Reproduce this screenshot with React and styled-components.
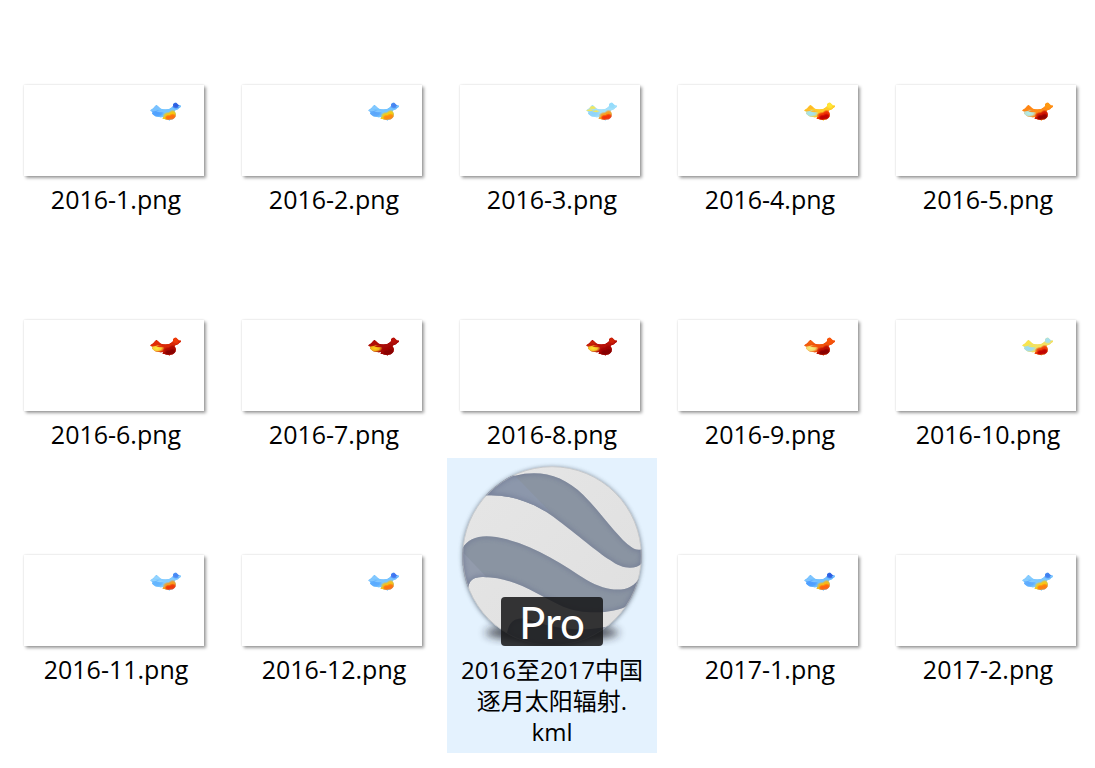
import React, { useId } from "react";
import styled, { createGlobalStyle } from "styled-components";

const GlobalStyle = createGlobalStyle`
  * { box-sizing: border-box; }
  body {
    margin: 0;
    background: #fff;
    color: #000;
    font-family: "Open Sans", "Noto Sans CJK SC", sans-serif;
    overflow-x: hidden;
  }
`;

/* The folder view is scrolled a little, so the first row starts above the window. */
const Viewport = styled.main`
  min-height: 100vh;
  overflow: hidden;
`;

const FileGrid = styled.ul`
  list-style: none;
  margin: -12px 0 0;
  padding: 0 0 12px 11px;
  display: grid;
  grid-template-columns: repeat(auto-fill, 210px);
  gap: 2px 8px;
  align-items: start;
`;

const Tile = styled.li`
  background: ${(p) => (p.$active ? "#e4f2fe" : "transparent")};
  padding-bottom: 6px;
`;

const Preview = styled.div`
  position: relative;
  height: 188px;
  display: flex;
  align-items: flex-end;
  justify-content: center;
`;

const Thumb = styled.div`
  display: flex;
  justify-content: flex-end;
  width: 180px;
  height: 91px;
  margin-right: 4px;
  padding: 17px 23px 0 0;
  background: #fff;
  box-shadow: 0 0 2px rgba(0, 0, 0, 0.14), 2px 2px 3px rgba(0, 0, 0, 0.38);
`;

const MapSvg = styled.svg`
  display: block;
  width: 31px;
  height: 19px;
`;

const GlobeSvg = styled.svg`
  display: block;
  width: 100%;
  height: 100%;
`;

const ProBadge = styled.span`
  position: absolute;
  bottom: 0;
  left: 54px;
  width: 102px;
  height: 49px;
  border-radius: 4px;
  background: rgba(22, 22, 23, 0.86);
  color: #fff;
  font: 400 44px/51px Lato, sans-serif;
  text-align: center;
`;

const Caption = styled.div`
  padding-top: 8px;
  font-size: ${(p) => (p.$wrapped ? "24px" : "25px")};
  line-height: 31px;
  text-align: center;
`;

const Line = styled.span`
  display: block;
  white-space: nowrap;
`;

const OUTLINE =
  "M29 54L34 51L38 48L42 45L43 41L49 38L53 41L56 45L60 48L66 51L76 52L84 51L90 48L94 45L98 42L98 36L102 32L107 31L112 36L116 40L123 40L122 45L117 49L113 53L108 54L103 58L106 62L107 67L106 74L102 79L96 83L89 84L87 88L84 84L77 83L72 81L66 81L68 75L62 77L54 75L46 74L39 69L35 65L36 60L31 58Z";

function HeatMap({ colors }) {
  const id = useId().replace(/[^a-zA-Z0-9]/g, "");
  const [base, north, tibet, east, south, core] = colors;
  const spots = [
    [tibet, 50, 64, 23, 12],
    [north, 49, 47, 13, 6],
    [north, 40, 55, 12, 4],
    [north, 60, 58, 13, 4],
    [base, 80, 56, 20, 7],
    [east, 107, 40, 14, 11],
    [base, 118, 44, 6, 4],
    [south, 84, 72, 18, 13],
    [south, 97, 66, 14, 13],
    [south, 74, 79, 10, 6],
    [core, 84, 77, 11, 9],
    [core, 97, 75, 13, 11],
  ];
  return (
    <MapSvg viewBox="29 30 93 57" preserveAspectRatio="none" aria-hidden="true">
      <defs>
        <clipPath id={`${id}c`}>
          <path d={OUTLINE} />
        </clipPath>
        {spots.map(([color], i) => (
          <radialGradient id={`${id}${i}`} key={i}>
            <stop offset="0" stopColor={color} />
            <stop offset="0.55" stopColor={color} stopOpacity="0.85" />
            <stop offset="1" stopColor={color} stopOpacity="0" />
          </radialGradient>
        ))}
      </defs>
      <g clipPath={`url(#${id}c)`}>
        <path d={OUTLINE} fill={base} />
        {spots.map(([, cx, cy, rx, ry], i) => (
          <ellipse key={i} cx={cx} cy={cy} rx={rx} ry={ry} fill={`url(#${id}${i})`} />
        ))}
      </g>
    </MapSvg>
  );
}

const BAND_TOP =
  "M130 137C190 130 270 150 340 200C420 260 470 305 510 330C550 360 590 360 610 335L610 296C598 302 583 299 575 292C530 260 490 195 430 135C370 75 300 58 225 77L130 60Z";
const BAND_MIDDLE =
  "M60 310C80 257 130 250 200 268C290 290 370 345 440 390C510 430 575 430 600 380L625 420L568 465C520 492 430 495 370 470C290 435 230 383 130 381C100 380 88 390 84 416L50 420Z";
const BAND_BOTTOM =
  "M200 565C202 515 225 496 270 510C330 532 420 550 510 528L500 600L200 600Z";

function GlobeIcon() {
  return (
    <GlobeSvg viewBox="21 24 630 564" aria-hidden="true">
      <defs>
        <clipPath id="globe"><circle cx="336" cy="318" r="269" /></clipPath>
        <clipPath id="bands"><path d={BAND_TOP} /><path d={BAND_MIDDLE} /><path d={BAND_BOTTOM} /></clipPath>
        <filter id="soft" x="-20%" y="-60%" width="140%" height="220%"><feGaussianBlur stdDeviation="13" /></filter>
        <filter id="rim" x="-10%" y="-10%" width="120%" height="120%"><feGaussianBlur stdDeviation="6" /></filter>
        <linearGradient id="light" x1="0" y1="0" x2="1" y2="1">
          <stop offset="0" stopColor="#e6e6e6" />
          <stop offset="1" stopColor="#dfdfdf" />
        </linearGradient>
      </defs>
      <ellipse cx="336" cy="548" rx="200" ry="26" fill="#20242a" opacity="0.75" filter="url(#soft)" />
      <circle cx="336" cy="320" r="270" fill="#5f6c7a" opacity="0.75" filter="url(#rim)" />
      <g clipPath="url(#globe)">
        <circle cx="336" cy="318" r="270" fill="url(#light)" />
        <g fill="#8a94a2">
          <path d={BAND_TOP} />
          <path d={BAND_MIDDLE} />
          <path d={BAND_BOTTOM} />
        </g>
        <g clipPath="url(#bands)">
          <path d="M225 77L100 60L100 150L300 180L330 185Z" fill="#8c97ab" />
          <path d="M67 305L40 430L150 392Z" fill="#929bac" />
          <g fill="none" stroke="#6c7592" strokeWidth="11" opacity="0.6" filter="url(#rim)">
            <path d={BAND_TOP} />
            <path d={BAND_MIDDLE} />
            <path d={BAND_BOTTOM} />
            <circle cx="336" cy="318" r="269" />
          </g>
        </g>
        <circle cx="336" cy="318" r="268" fill="none" stroke="#b6babf" strokeWidth="3" opacity="0.7" />
      </g>
    </GlobeSvg>
  );
}

/* Colours: base, north, Tibet, north-east, south, south core. */
const FILES = [
  { name: "2016-1.png", colors: ["#74c4ff", "#7cc0ff", "#4e9fff", "#2858e0", "#ffc800", "#ff6c10"] },
  { name: "2016-2.png", colors: ["#74c4ff", "#84c8ff", "#5aa5fa", "#4480f0", "#ffcc00", "#ff8810"] },
  { name: "2016-3.png", colors: ["#a4e0fa", "#f4e858", "#8fd3fa", "#94dcfc", "#ff9a10", "#f43008"] },
  { name: "2016-4.png", colors: ["#ffcc2a", "#ffb828", "#a0e4f8", "#ffe838", "#ee2400", "#c00000"] },
  { name: "2016-5.png", colors: ["#ff8c18", "#ff8414", "#b0f0f0", "#ff9a10", "#cc0c00", "#900000"] },
  { name: "2016-6.png", colors: ["#d82808", "#e42c08", "#ffec40", "#f03c08", "#ac0800", "#880000"] },
  { name: "2016-7.png", colors: ["#a80c08", "#b40c04", "#ffd01a", "#bc1008", "#a00400", "#880000"] },
  { name: "2016-8.png", colors: ["#b81008", "#cc2408", "#ffe430", "#d02408", "#a00000", "#840000"] },
  { name: "2016-9.png", colors: ["#f0500c", "#f4600c", "#f4f080", "#fa5408", "#b80800", "#880000"] },
  { name: "2016-10.png", colors: ["#f4e060", "#fae648", "#98dcfa", "#a0e0f8", "#ee3000", "#c00000"] },
  { name: "2016-11.png", colors: ["#84ccff", "#94d4ff", "#62b4ff", "#4484f4", "#ff9a10", "#f03408"] },
  { name: "2016-12.png", colors: ["#78c4ff", "#84c8ff", "#58aaff", "#3c70f0", "#ffc008", "#ff7010"] },
  { name: "2016至2017中国逐月太阳辐射.kml", lines: ["2016至2017中国", "逐月太阳辐射.", "kml"], active: true },
  { name: "2017-1.png", colors: ["#70c0ff", "#80c4ff", "#4c9cff", "#2858e0", "#ffb808", "#ff6010"] },
  { name: "2017-2.png", colors: ["#7cc8ff", "#88ccff", "#5caaff", "#3c7cf0", "#ffc808", "#ff7c10"] },
];

export default function App() {
  return (
    <>
      <GlobalStyle />
      <Viewport>
        <FileGrid>
          {FILES.map((file) => (
            <Tile key={file.name} $active={file.active}>
              <Preview>
                {file.colors ? (
                  <Thumb><HeatMap colors={file.colors} /></Thumb>
                ) : (
                  <>
                    <GlobeIcon />
                    <ProBadge>Pro</ProBadge>
                  </>
                )}
              </Preview>
              <Caption $wrapped={Boolean(file.lines)}>
                {(file.lines || [file.name]).map((line) => (
                  <Line key={line}>{line}</Line>
                ))}
              </Caption>
            </Tile>
          ))}
        </FileGrid>
      </Viewport>
    </>
  );
}
